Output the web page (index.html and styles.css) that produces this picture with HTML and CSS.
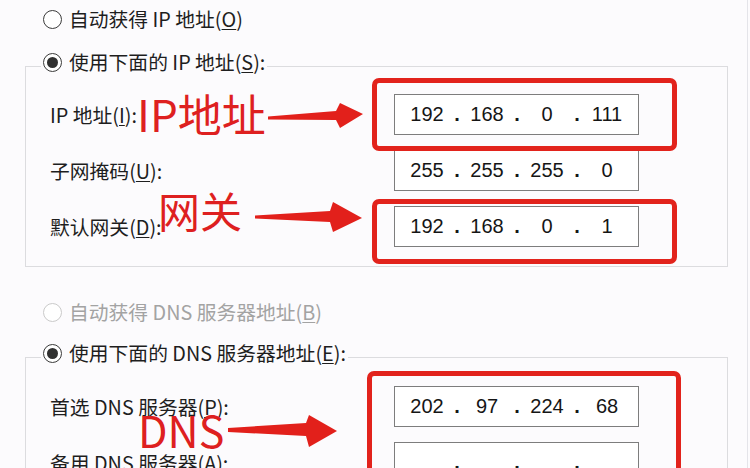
FILE: index.html
```html
<!DOCTYPE html>
<html lang="zh-CN">
<head>
<meta charset="utf-8">
<title>IP 设置</title>
<link rel="stylesheet" href="styles.css">
</head>
<body>
<div class="page">
  <div class="radio-row"><span class="radio"></span><span>自动获得 IP 地址(<u>O</u>)</span></div>

  <fieldset class="group">
    <legend><span class="legend-inner"><span class="radio checked"></span><span>使用下面的 IP 地址(<u>S</u>):</span></span></legend>
    <div class="rows">
      <div class="row">
        <span class="label">IP 地址(<u>I</u>):</span>
        <div class="ip"><span class="oct">192</span><span class="dot">.</span><span class="oct">168</span><span class="dot">.</span><span class="oct">0</span><span class="dot">.</span><span class="oct">111</span></div>
      </div>
      <div class="row">
        <span class="label">子网掩码(<u>U</u>):</span>
        <div class="ip"><span class="oct">255</span><span class="dot">.</span><span class="oct">255</span><span class="dot">.</span><span class="oct">255</span><span class="dot">.</span><span class="oct">0</span></div>
      </div>
      <div class="row">
        <span class="label">默认网关(<u>D</u>):</span>
        <div class="ip"><span class="oct">192</span><span class="dot">.</span><span class="oct">168</span><span class="dot">.</span><span class="oct">0</span><span class="dot">.</span><span class="oct">1</span></div>
      </div>
    </div>
  </fieldset>

  <div class="radio-row disabled spaced"><span class="radio"></span><span>自动获得 DNS 服务器地址(<u>B</u>)</span></div>

  <fieldset class="group group-dns">
    <legend><span class="legend-inner"><span class="radio checked"></span><span>使用下面的 DNS 服务器地址(<u>E</u>):</span></span></legend>
    <div class="rows rows-dns">
      <div class="row">
        <span class="label">首选 DNS 服务器(<u>P</u>):</span>
        <div class="ip"><span class="oct">202</span><span class="dot">.</span><span class="oct">97</span><span class="dot">.</span><span class="oct">224</span><span class="dot">.</span><span class="oct">68</span></div>
      </div>
      <div class="row">
        <span class="label">备用 DNS 服务器(<u>A</u>):</span>
        <div class="ip"><span class="oct"></span><span class="dot">.</span><span class="oct"></span><span class="dot">.</span><span class="oct"></span><span class="dot">.</span><span class="oct"></span></div>
      </div>
    </div>
  </fieldset>

  <div class="redbox box-ip"></div>
  <div class="redbox box-gw"></div>
  <div class="redbox box-dns"></div>

  <div class="note note-ip">IP地址</div>
  <div class="note note-gw">网关</div>
  <div class="note note-dns">DNS</div>

  <svg class="arrows" width="750" height="468" viewBox="0 0 750 468" aria-hidden="true">
    <path d="M268,116.5 L336,111 L340,103 L363,114 L340,128 L336,120 L268,119.5 Z"/>
    <path d="M255,215.5 L330,211 L333,202 L362,218 L333,232 L330,222 L255,218.5 Z"/>
    <path d="M228,428 L306,423 L309,415 L337,431 L309,447 L306,436 L228,432 Z"/>
  </svg>
</div>
</body>
</html>
```
FILE: styles.css
```css
html, body {
  margin: 0;
  padding: 0;
}

body {
  width: 750px;
  height: 468px;
  overflow: hidden;
  background: #fcfbfd;
  font-family: "Noto Sans CJK SC", "Noto Sans", sans-serif;
  font-size: 19.8px;
  color: #1e1e1e;
}

.page {
  position: relative;
  width: 748px;
  height: 468px;
  box-sizing: border-box;
  padding-top: 6px;
  border-right: 1px solid #e4e4e9;
}

u {
  text-underline-offset: 2px;
  text-decoration-thickness: 1px;
}

.radio-row {
  display: flex;
  align-items: center;
  gap: 7px;
  height: 26px;
  line-height: 26px;
  margin-left: 43px;
}

.radio-row.spaced {
  margin-top: 32px;
}

.radio {
  flex: none;
  width: 19px;
  height: 19px;
  box-sizing: border-box;
  border: 1.4px solid #3a3a3a;
  border-radius: 50%;
  background: #fff;
  display: inline-flex;
  align-items: center;
  justify-content: center;
}

.radio.checked::after {
  content: "";
  width: 11px;
  height: 11px;
  border-radius: 50%;
  background: #303030;
}

.disabled {
  color: #a3a3a3;
}

.disabled .radio {
  border-color: #cacaca;
}

.group {
  margin: 17px 0 0 25px;
  padding: 0;
  width: 703px;
  min-width: 0;
  box-sizing: border-box;
  border: 1px solid #dcdcdf;
}

.group-dns {
  margin-top: 15px;
}

.group legend {
  margin-left: 15px;
  padding: 0 2px 8px;
}

.legend-inner {
  display: flex;
  align-items: center;
  gap: 7px;
  height: 26px;
  line-height: 26px;
}

.rows {
  display: flex;
  flex-direction: column;
  gap: 15px;
  padding: 11px 0 19px 24px;
}

.rows-dns {
  padding-top: 12px;
}

.row {
  display: flex;
  align-items: center;
  height: 41px;
}

.label {
  flex: none;
  width: 344px;
}

.ip {
  flex: none;
  width: 245px;
  height: 41px;
  box-sizing: border-box;
  border: 1px solid #7d7d7d;
  background: #fff;
  display: flex;
  align-items: center;
  padding-left: 8px;
  font-family: "Liberation Sans", Arial, sans-serif;
  font-size: 20px;
  color: #151515;
}

.oct {
  width: 48px;
  text-align: center;
}

.dot {
  width: 12px;
  text-align: center;
  font-weight: bold;
}

.redbox {
  position: absolute;
  box-sizing: border-box;
  border: 5px solid #e2231c;
  border-radius: 7px;
}

.box-ip {
  left: 372px;
  top: 78px;
  width: 305px;
  height: 73px;
}

.box-gw {
  left: 372px;
  top: 199px;
  width: 305px;
  height: 65px;
}

.box-dns {
  left: 367px;
  top: 371px;
  width: 314px;
  height: 150px;
}

.note {
  position: absolute;
  color: #de2020;
  line-height: 1;
  white-space: nowrap;
}

.note-ip {
  left: 137px;
  top: 91px;
  font-size: 44px;
}

.note-gw {
  left: 158px;
  top: 189px;
  font-size: 42px;
}

.note-dns {
  left: 138px;
  top: 408px;
  font-size: 43px;
}

.arrows {
  position: absolute;
  left: 0;
  top: 0;
  fill: #e2201b;
  pointer-events: none;
}
```
